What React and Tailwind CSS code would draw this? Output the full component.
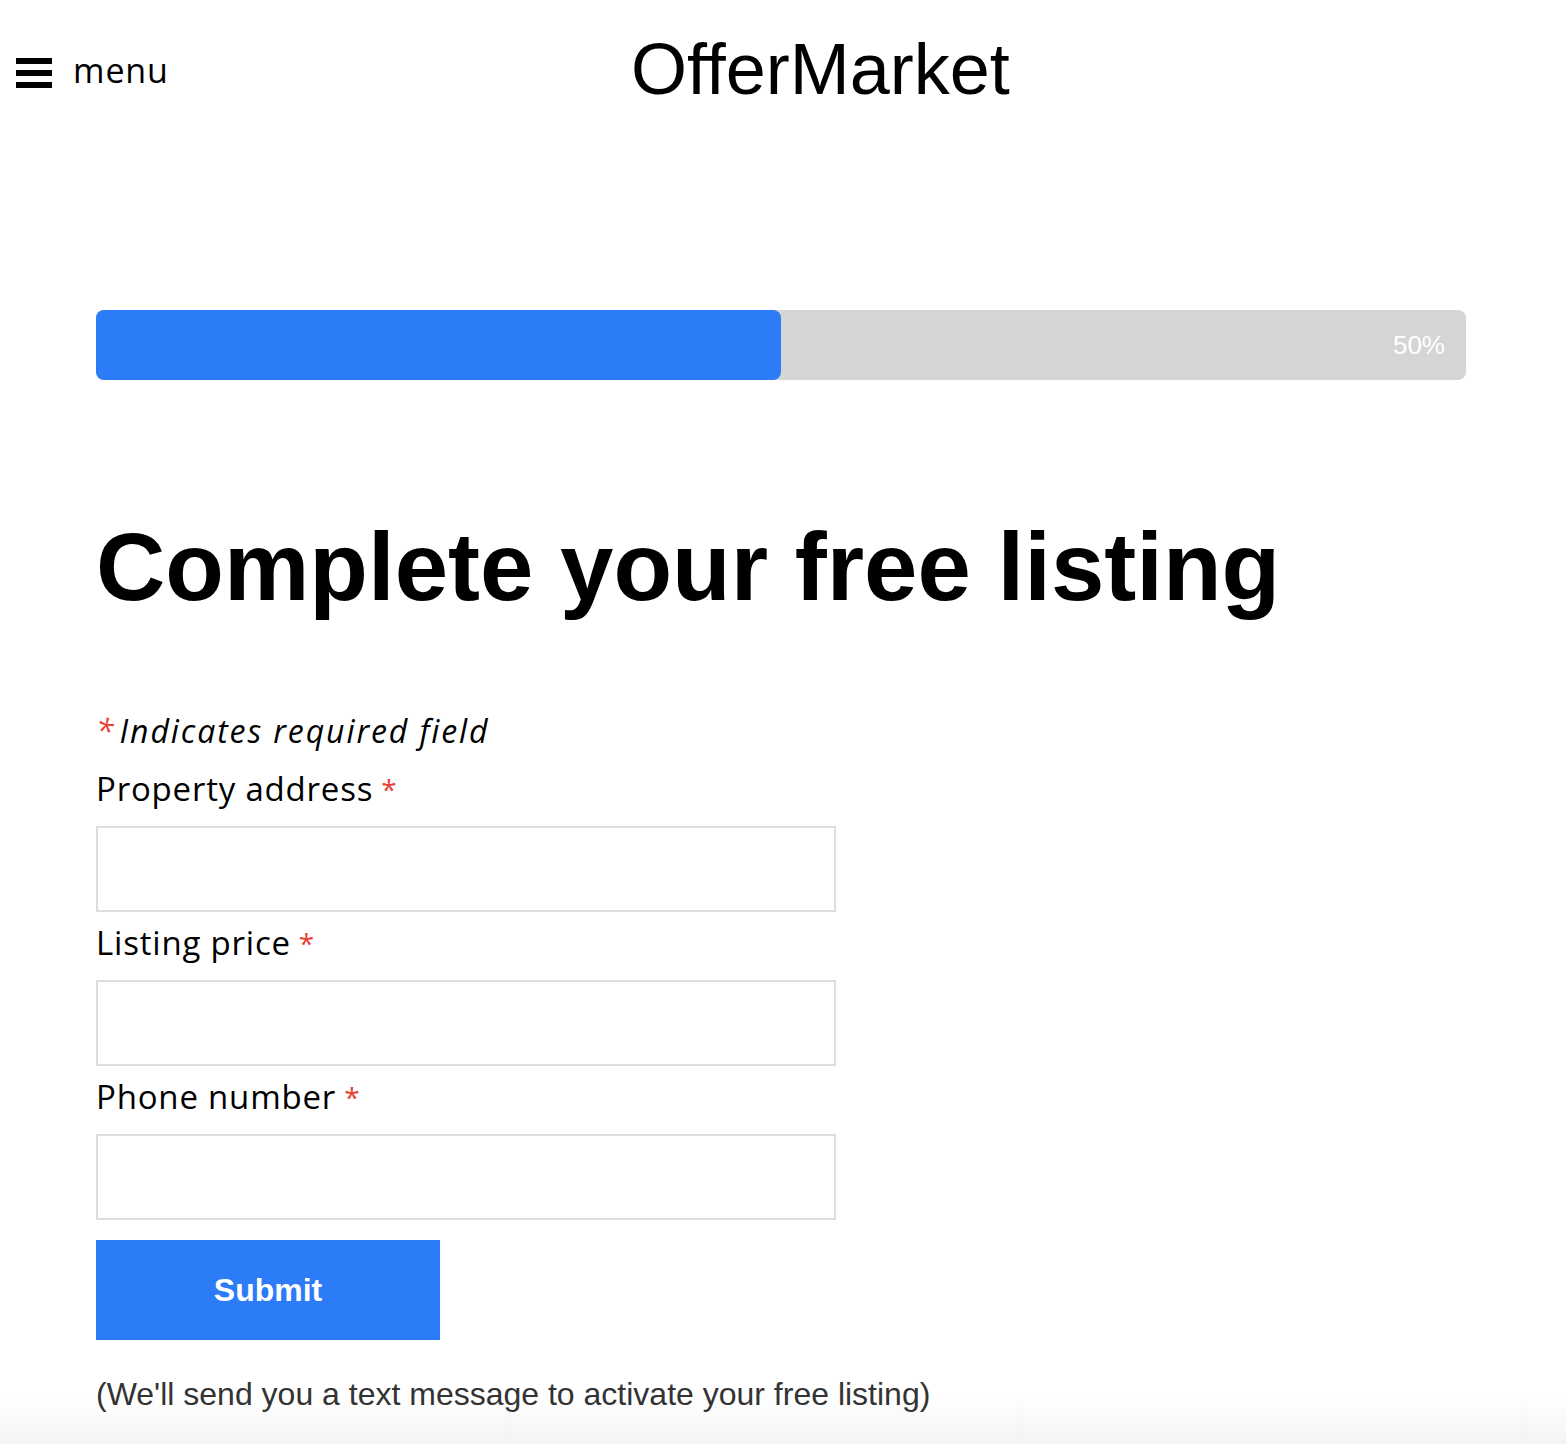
export default function App() {
  const fields = ["Property address", "Listing price", "Phone number"];
  return (
    <div className="w-[1566px] h-[1444px] overflow-hidden bg-[linear-gradient(to_bottom,#ffffff_1396px,#f3f3f3_1444px)] text-black">
      <header className="flex items-center h-[138px] pl-4">
        <div className="flex items-center w-[615px] mt-[8px]">
          <div className="flex flex-col gap-[6px] w-[36px]">
            <span className="block h-[6px] bg-black" />
            <span className="block h-[6px] bg-black" />
            <span className="block h-[6px] bg-black" />
          </div>
          <span className="ml-[21px] font-['Open_Sans',sans-serif] text-[34px] leading-none tracking-[0.9px] -mt-[6px]">
            menu
          </span>
        </div>
        <div className="font-['Liberation_Sans',Arial,sans-serif] text-[72px] leading-none">
          OfferMarket
        </div>
      </header>

      <main className="pl-[96px] pr-[100px]">
        <div className="mt-[172px] h-[70px] rounded-[8px] bg-[#d5d5d5] flex items-center relative">
          <div className="h-full w-1/2 rounded-[8px] bg-[#2c7bf7]" />
          <span className="ml-auto pr-[21px] font-['Liberation_Sans',Arial,sans-serif] text-[26px] text-white">
            50%
          </span>
        </div>

        <h1 className="mt-[139px] font-['Liberation_Sans',Arial,sans-serif] font-bold text-[96px] leading-none">
          Complete your free listing
        </h1>

        <p className="mt-[96px] font-['Open_Sans',sans-serif] italic text-[32px] leading-[40px] tracking-[1.9px]">
          <span className="text-[#e8412f] mr-[4px]">*</span>Indicates required field
        </p>

        <form className="w-[740px]" onSubmit={(e) => e.preventDefault()}>
          {fields.map((f, i) => (
            <div key={f} className={i === 0 ? "mt-[18px]" : "mt-[11px]"}>
              <label className="block font-['Open_Sans',sans-serif] text-[33px] leading-[40px] tracking-[0.8px]">
                {f}<span className="ml-[8px] text-[#e8412f] text-[28px] align-top">*</span>
              </label>
              <input
                type="text"
                className="mt-[17px] block w-[740px] h-[86px] border-2 border-[#dedede] bg-white outline-none"
              />
            </div>
          ))}
          <button
            type="submit"
            className="mt-[20px] w-[344px] h-[100px] bg-[#2c7bf7] text-white font-['Liberation_Sans',Arial,sans-serif] font-bold text-[32px]"
          >
            Submit
          </button>
        </form>

        <p className="mt-[34px] font-['Liberation_Sans',Arial,sans-serif] text-[32px] leading-[40px] text-[#333333]">
          (We'll send you a text message to activate your free listing)
        </p>
      </main>
    </div>
  );
}
